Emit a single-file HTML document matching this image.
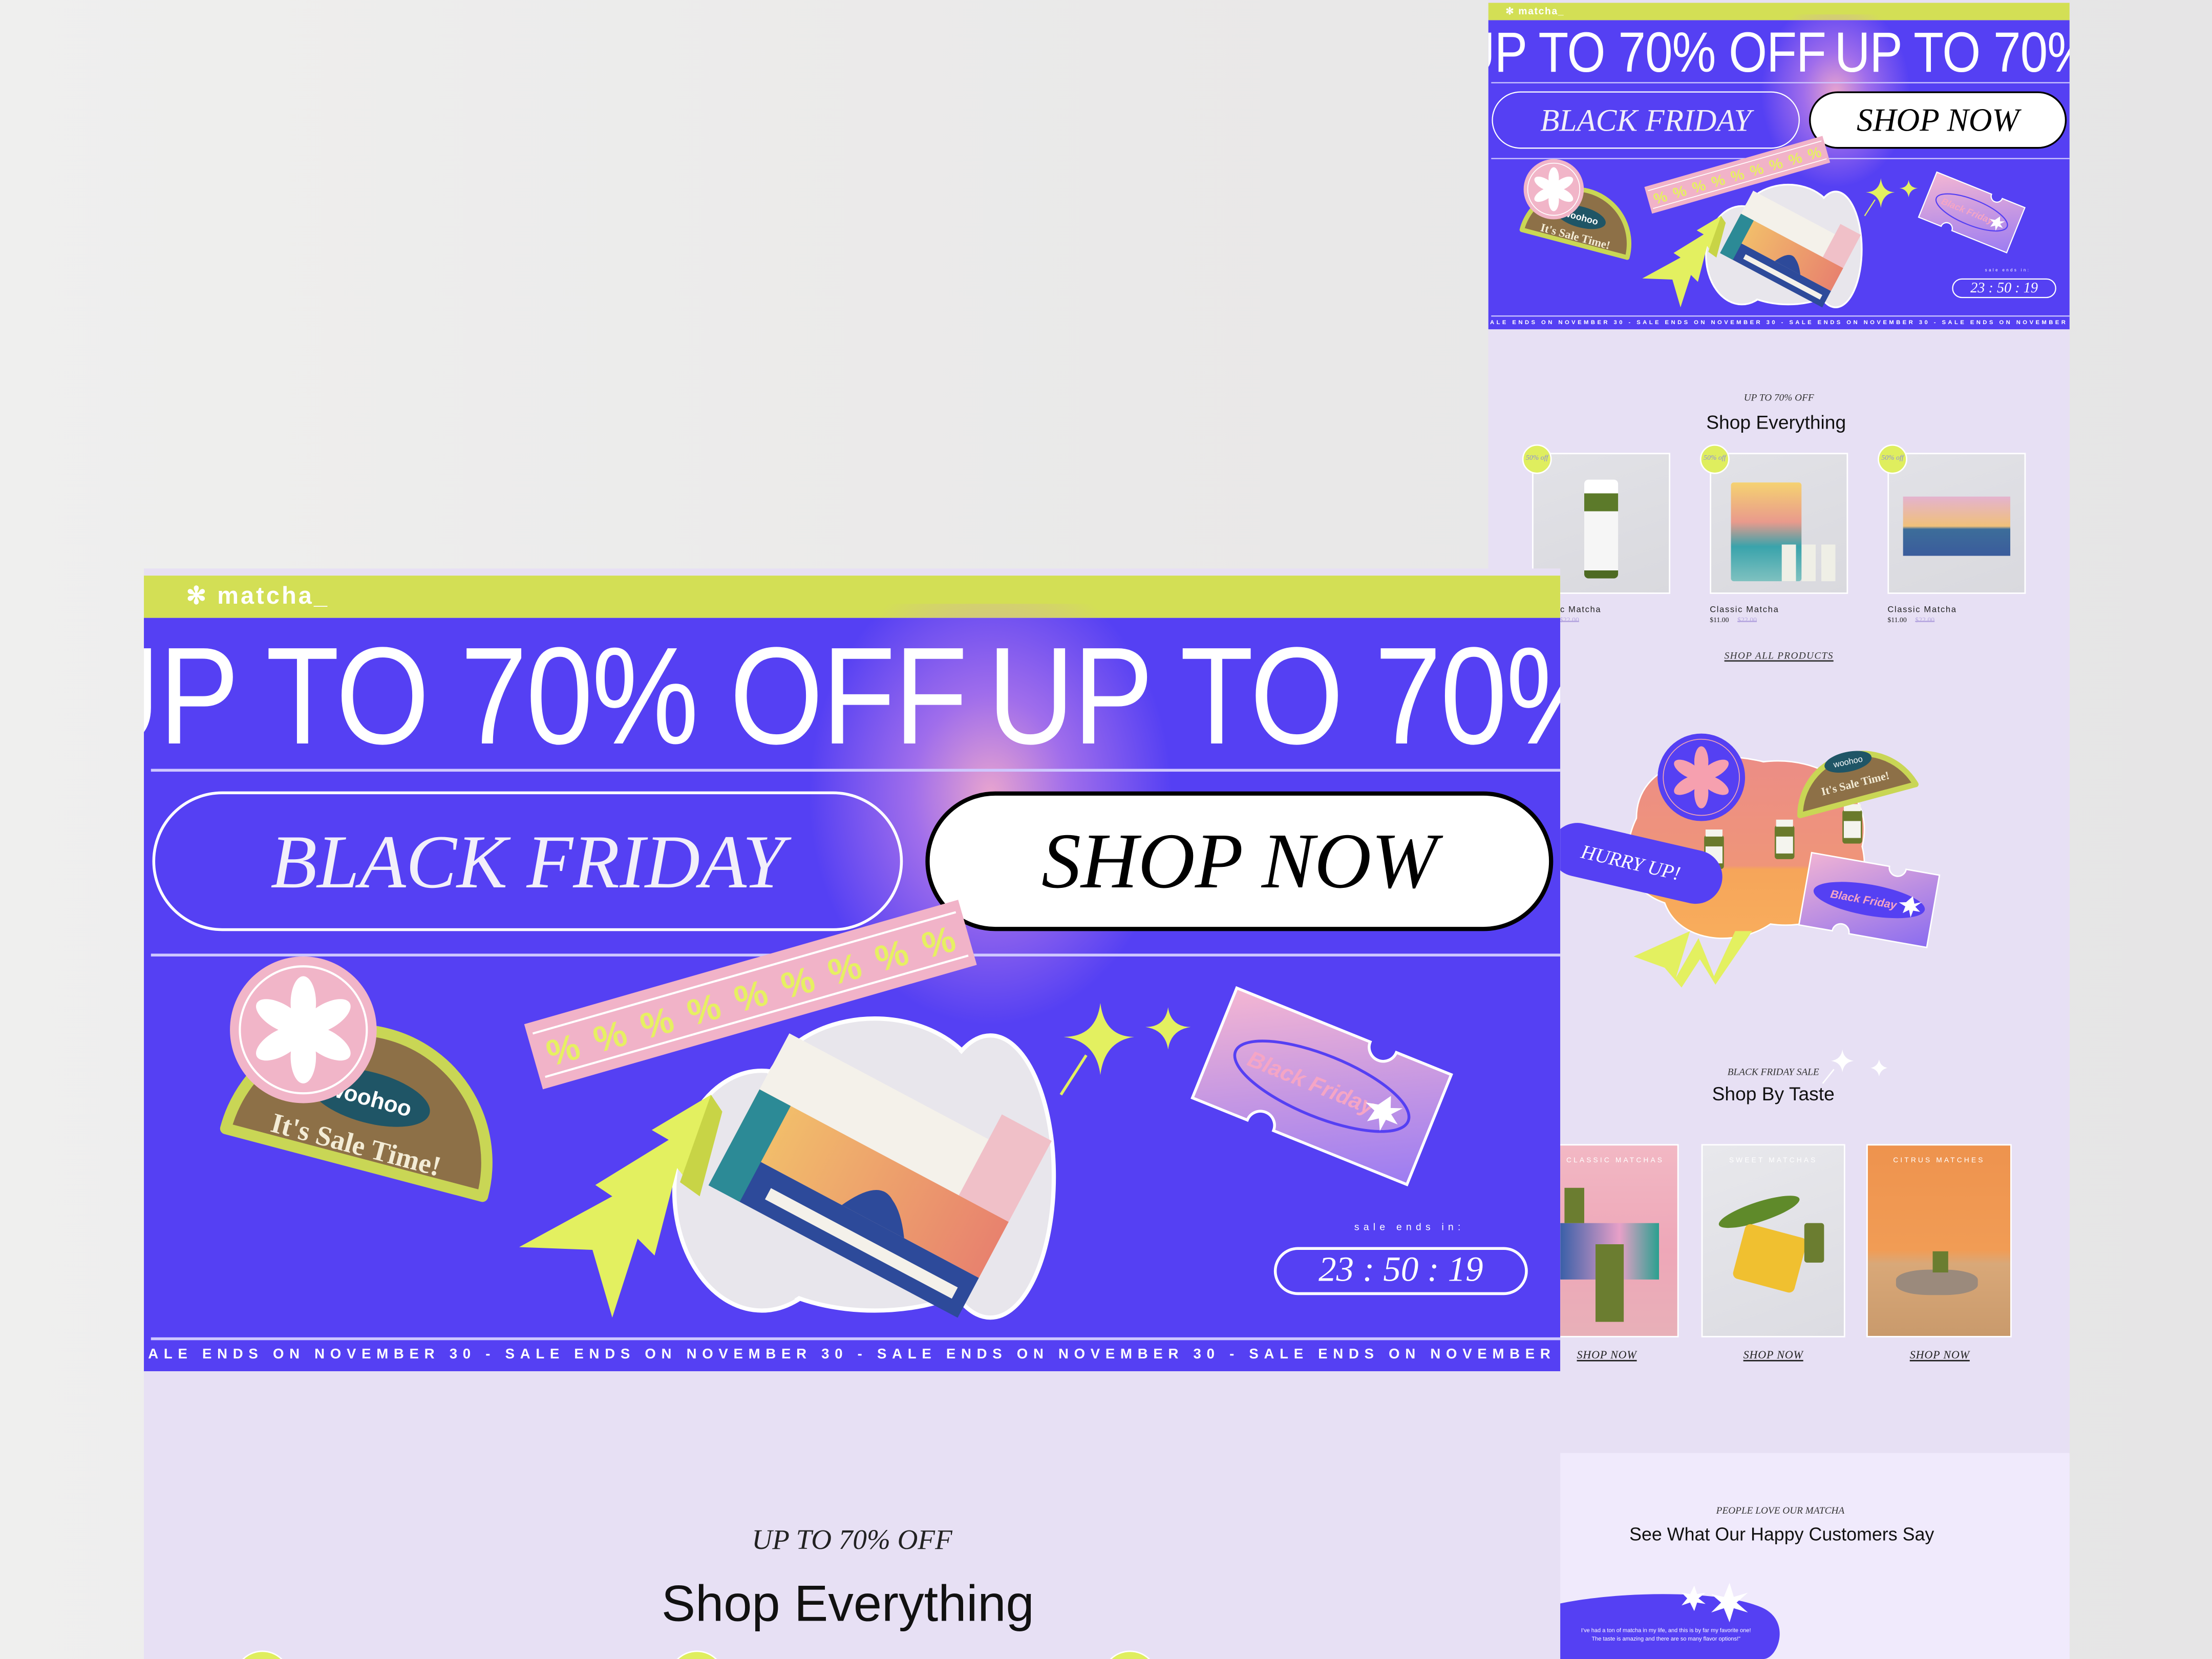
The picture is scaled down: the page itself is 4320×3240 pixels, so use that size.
<!DOCTYPE html>
<html><head><meta charset="utf-8">
<style>
*{margin:0;padding:0;box-sizing:border-box}
html,body{width:4320px;height:3240px;overflow:hidden;background:#ebeaea}
#s{position:absolute;left:0;top:0;width:1568px;height:1176px;transform:scale(2.75511);transform-origin:0 0;background:linear-gradient(90deg,#efefee 0%,#e9e8e8 60%,#e6e5e6 100%);font-family:"Liberation Sans",sans-serif;overflow:hidden}
.abs{position:absolute}
.hero{position:absolute;width:1004px;height:564px;overflow:hidden;transform-origin:0 0}
.gbar{position:absolute;left:0;top:0;width:1004px;height:30px;background:#d3df55}
.logo{position:absolute;left:30px;top:5px;color:#fff;font-weight:bold;font-size:17px;letter-spacing:1.5px}
.pur{position:absolute;left:0;top:30px;width:1004px;height:534px;background:#5540f3}
.glow{position:absolute;left:470px;top:20px;width:260px;height:300px;background:radial-gradient(ellipse at 50% 45%,rgba(240,170,205,.95) 0%,rgba(210,140,230,.6) 30%,rgba(85,64,243,0) 70%)}
.big{position:absolute;top:36px;color:#fff;font-size:98px;line-height:98px;white-space:nowrap;letter-spacing:-1px;transform:scaleX(.87);transform-origin:0 0}
.hl{position:absolute;left:5px;width:999px;height:2px;background:#cfc8ff}
.pill{position:absolute;border-radius:50px;display:flex;align-items:center;justify-content:center;font-family:"Liberation Serif",serif;font-style:italic;white-space:nowrap}
.serif{font-family:"Liberation Serif",serif;font-style:italic}
.mq{position:absolute;left:3px;top:547px;color:#fff;font-size:10px;font-weight:bold;letter-spacing:3.9px;white-space:nowrap}
.ctr{position:absolute;text-align:center;white-space:nowrap;transform:translateX(-50%)}
.prod{position:absolute;width:98px;height:100px;border:1.5px solid #fff;background:linear-gradient(160deg,#e2e2e7,#d9d9de);overflow:hidden}
.badge{position:absolute;width:21px;height:21px;border-radius:50%;background:#dfee5e;border:1px solid #fff;font-family:"Liberation Serif",serif;font-style:italic;font-size:5px;color:#8a8be0;display:flex;align-items:center;justify-content:center}
.pl{position:absolute;font-size:6px;letter-spacing:.6px;color:#222}
.pp{position:absolute;font-size:5px;font-family:"Liberation Serif",serif;color:#222}
.pp s{color:#b7a8e0;margin-left:6px}
.card{position:absolute;height:137px;border:1.5px solid #fff;overflow:hidden}
.ct{position:absolute;top:8px;left:0;right:0;text-align:center;color:#fff;font-size:5px;letter-spacing:1.5px}
.sn{position:absolute;font-family:"Liberation Serif",serif;font-style:italic;font-size:8px;color:#222;letter-spacing:.3px;transform:translateX(-50%);text-decoration:underline;text-decoration-thickness:.5px}
</style></head><body>
<div id="s">

<!-- RIGHT PAGE -->
<div class="abs" style="left:1055px;top:0;width:412px;height:1176px;background:#e7e0f4"></div>
<div class="abs" style="left:1055px;top:1030px;width:412px;height:146px;background:#f0eafc"></div>

<div class="hero" style="left:1055px;top:2px;transform:scale(0.4104)">
 <div class="gbar"><span class="logo">✻ matcha_</span></div>
 <div class="pur"></div>
 <div class="glow"></div>
 <div class="big" style="left:-50px">UP TO 70% OFF</div>
 <div class="big" style="left:598px">UP TO 70%</div>
 <div class="hl" style="top:137px"></div>
 <div class="pill" style="left:6px;top:153px;width:532px;height:99px;border:2px solid #fff;color:#f2effa;font-size:54px">BLACK FRIDAY</div>
 <div class="pill" style="left:554px;top:153px;width:445px;height:99px;border:3px solid #000;background:#fff;color:#000;font-size:56px">SHOP NOW</div>
 <div class="hl" style="top:268px"></div>
 <svg class="abs" style="left:0;top:0" width="1004" height="564" viewBox="0 0 1004 564">
  <defs>
   <linearGradient id="tk" x1="0" y1="0" x2="1" y2="1"><stop offset="0" stop-color="#f4b6d2"/><stop offset="1" stop-color="#9c7cf2"/></linearGradient>
   <linearGradient id="bx" x1="0" y1="0" x2="1" y2="0"><stop offset="0" stop-color="#f3c56a"/><stop offset="1" stop-color="#e8826e"/></linearGradient>
  </defs>
  <path d="M58,392 A93 93 0 0 1 240,440 Z" fill="#8d7047" stroke="#c9d655" stroke-width="8" stroke-linejoin="round"/>
  <ellipse cx="160" cy="370" rx="44" ry="18" transform="rotate(15 160 370)" fill="#1f5566"/>
  <text x="160" y="376" font-size="16" fill="#fff" font-weight="bold" text-anchor="middle" transform="rotate(15 160 370)">woohoo</text>
  <text x="150" y="410" font-family="Liberation Serif" font-weight="bold" font-size="20" fill="#f3ecd6" text-anchor="middle" transform="rotate(15 150 405)">It's Sale Time!</text>
  <circle cx="113" cy="322" r="52" fill="#f1b5c8"/><circle cx="113" cy="322" r="45" fill="none" stroke="#fff" stroke-width="1.5"/>
  <g transform="translate(113 322)" fill="#fff">
   <ellipse cx="0" cy="-19" rx="9" ry="19"/><ellipse cx="0" cy="-19" rx="9" ry="19" transform="rotate(60)"/><ellipse cx="0" cy="-19" rx="9" ry="19" transform="rotate(120)"/><ellipse cx="0" cy="-19" rx="9" ry="19" transform="rotate(180)"/><ellipse cx="0" cy="-19" rx="9" ry="19" transform="rotate(240)"/><ellipse cx="0" cy="-19" rx="9" ry="19" transform="rotate(300)"/>
  </g>
  <g transform="translate(508 416)" fill="#e8e6ec" stroke="#fff" stroke-width="3">
   <ellipse cx="-70" cy="20" rx="62" ry="85"/><ellipse cx="10" cy="-40" rx="80" ry="62"/><ellipse cx="92" cy="10" rx="45" ry="100"/><ellipse cx="10" cy="55" rx="95" ry="50"/>
  </g>
  <g transform="translate(508 416)" fill="#e8e6ec"><ellipse cx="-70" cy="20" rx="60" ry="83"/><ellipse cx="10" cy="-40" rx="78" ry="60"/><ellipse cx="92" cy="10" rx="43" ry="98"/><ellipse cx="10" cy="55" rx="93" ry="48"/><ellipse cx="10" cy="10" rx="100" ry="70"/></g>
  <g transform="translate(520 420) rotate(28)">
   <rect x="-100" y="-55" width="200" height="45" fill="#f4f1ea"/>
   <rect x="-100" y="-10" width="200" height="45" fill="url(#bx)"/>
   <rect x="-100" y="35" width="200" height="32" fill="#2d4a9a"/>
   <path d="M-10,35 q15,-30 30,-20 q10,5 20,20 z" fill="#2d4a9a"/>
   <rect x="-60" y="48" width="150" height="9" fill="#f4f1ea"/>
   <rect x="-100" y="-10" width="25" height="77" fill="#2c8a96"/>
   <rect x="60" y="-75" width="40" height="65" fill="#f0c0c8"/>
  </g>
  <g transform="translate(430 297) rotate(-16)">
   <rect x="-160" y="-24" width="320" height="48" fill="#f1b3c8"/>
   <line x1="-156" y1="-16" x2="156" y2="-16" stroke="#fff" stroke-width="1.5"/><line x1="-156" y1="16" x2="156" y2="16" stroke="#fff" stroke-width="1.5"/>
   <text x="-150" y="10" font-size="26" fill="#e6f062" font-weight="bold" textLength="300" lengthAdjust="spacing">%%%%%%%%%</text>
  </g>
  <polygon points="266,476 332,440 320,432 372,400 360,393 402,368 386,430 378,420 362,482 350,470 332,526 318,478" fill="#e3f060"/>
  <polygon points="380,430 402,368 410,380 394,440" fill="#c8d446"/>
  <path d="M678,303 Q681,327 702,327 Q681,330 678,354 Q675,330 652,327 Q675,327 678,303Z" fill="#e3f060"/>
  <line x1="668" y1="340" x2="650" y2="368" stroke="#e3f060" stroke-width="2"/>
  <path d="M726,306 Q728,320 742,320 Q728,322 726,336 Q724,322 710,320 Q724,320 726,306Z" fill="#e3f060"/>
  <g transform="translate(835 362) rotate(22)">
   <path d="M-82,-42 H20 a10,10 0 0 0 20,0 H82 V42 H-20 a10,10 0 0 0 -20,0 H-82 Z" fill="url(#tk)" stroke="#fff" stroke-width="2"/>
   <ellipse cx="0" cy="0" rx="66" ry="22" fill="none" stroke="#5540f3" stroke-width="2"/>
   <text x="-8" y="6" font-size="16" font-weight="bold" font-style="italic" fill="#f5a5c5" text-anchor="middle">Black Friday</text>
   <path d="M48,-12 l3,8 8,-3 -6,7 7,5 -9,0 -1,9 -4,-8 -7,5 2,-9 -8,-3 9,-2z" fill="#fff"/>
  </g>
 </svg>
 <div class="abs" style="left:858px;top:459px;color:#fff;font-size:7px;letter-spacing:3px">sale ends in:</div>
 <div class="pill" style="left:801px;top:476px;width:180px;height:34px;border:2px solid #fff;color:#fff;font-size:25px">23 : 50 : 19</div>
 <div class="hl" style="top:540px"></div>
 <div class="mq">ALE ENDS ON NOVEMBER 30 - SALE ENDS ON NOVEMBER 30 - SALE ENDS ON NOVEMBER 30 - SALE ENDS ON NOVEMBER 30 - SALE</div>
</div>

<div class="ctr serif" style="left:1261px;top:278px;font-size:7px;color:#333">UP TO 70% OFF</div>
<div class="ctr" style="left:1259px;top:292px;font-size:13.5px;color:#111">Shop Everything</div>

<div class="prod" style="left:1086px;top:321px"><div class="abs" style="left:36px;top:18px;width:24px;height:70px;background:linear-gradient(#fff 0 14%,#5c7a2a 14% 32%,#f6f6f6 32% 92%,#4d6a22 92%);border-radius:3px"></div></div>
<div class="prod" style="left:1212px;top:321px"><div class="abs" style="left:14px;top:20px;width:50px;height:70px;background:linear-gradient(#f5d271,#e99a8c 40%,#39a3ab 65%,#7fc1c0);border-radius:2px"></div><div class="abs" style="left:50px;top:64px;width:40px;height:26px;background:repeating-linear-gradient(90deg,#efefe6 0 10px,transparent 10px 14px)"></div></div>
<div class="prod" style="left:1338px;top:321px"><div class="abs" style="left:10px;top:30px;width:76px;height:42px;background:linear-gradient(180deg,#e4b3cf,#f0c07a 50%,#3c6d9a 55%,#3b5c9c);"></div></div>
<div class="badge" style="left:1079px;top:315px">50% off</div>
<div class="badge" style="left:1205px;top:315px">50% off</div>
<div class="badge" style="left:1331px;top:315px">50% off</div>
<div class="pl" style="left:1086px;top:430px">Classic Matcha</div><div class="pp" style="left:1086px;top:438px">$11.00<s>$22.00</s></div>
<div class="pl" style="left:1212px;top:430px">Classic Matcha</div><div class="pp" style="left:1212px;top:438px">$11.00<s>$22.00</s></div>
<div class="pl" style="left:1338px;top:430px">Classic Matcha</div><div class="pp" style="left:1338px;top:438px">$11.00<s>$22.00</s></div>
<div class="ctr serif" style="left:1261px;top:461px;font-size:7px;color:#333;letter-spacing:.5px;text-decoration:underline">SHOP ALL PRODUCTS</div>

<svg class="abs" style="left:0;top:0" width="1568" height="1176" viewBox="0 0 1568 1176">
 <defs>
  <linearGradient id="sb" x1="0" y1="0" x2="0" y2="1"><stop offset="0" stop-color="#ec8d86"/><stop offset=".6" stop-color="#ef9579"/><stop offset=".62" stop-color="#f6a55a"/><stop offset="1" stop-color="#f8ad5c"/></linearGradient>
  <linearGradient id="tk2" x1="0" y1="0" x2="1" y2="1"><stop offset="0" stop-color="#f0b3d4"/><stop offset="1" stop-color="#8a6cf0"/></linearGradient>
 </defs>
 <path d="M1160,580 C1160,540 1210,530 1250,540 C1290,535 1330,560 1320,600 C1330,640 1290,660 1255,655 C1230,672 1190,668 1180,640 C1150,630 1150,600 1160,580Z" fill="url(#sb)" stroke="#fff" stroke-width="1"/>
 <g fill="#6a7a2c"><rect x="1208" y="592" width="14" height="24" rx="2"/><rect x="1258" y="585" width="14" height="24" rx="2"/><rect x="1306" y="574" width="14" height="24" rx="2"/></g>
 <g fill="#f4f4ee"><rect x="1209" y="600" width="12" height="12"/><rect x="1259" y="593" width="12" height="12"/><rect x="1307" y="582" width="12" height="12"/><rect x="1209" y="588" width="12" height="5"/><rect x="1259" y="581" width="12" height="5"/><rect x="1307" y="570" width="12" height="5"/></g>
 <circle cx="1206" cy="551" r="31" fill="#5540f3"/><circle cx="1206" cy="551" r="27" fill="none" stroke="#f4a7b3" stroke-width=".6"/>
 <g transform="translate(1206 551)" fill="#f6a0af"><ellipse cy="-11" rx="5" ry="11"/><ellipse cy="-11" rx="5" ry="11" transform="rotate(60)"/><ellipse cy="-11" rx="5" ry="11" transform="rotate(120)"/><ellipse cy="-11" rx="5" ry="11" transform="rotate(180)"/><ellipse cy="-11" rx="5" ry="11" transform="rotate(240)"/><ellipse cy="-11" rx="5" ry="11" transform="rotate(300)"/></g>
 <path d="M1276,578 A44 44 0 0 1 1358,556 Z" fill="#8d7047" stroke="#c9d655" stroke-width="4" stroke-linejoin="round"/>
 <ellipse cx="1310" cy="540" rx="17" ry="7" transform="rotate(-12 1310 540)" fill="#1f5566"/>
 <text x="1310" y="542" font-size="6" fill="#fff" text-anchor="middle" transform="rotate(-12 1310 540)">woohoo</text>
 <text x="1315" y="558" font-family="Liberation Serif" font-size="8" font-weight="bold" fill="#f3ecd6" text-anchor="middle" transform="rotate(-14 1315 555)">It's Sale Time!</text>
 <g transform="translate(1160 612) rotate(13)"><rect x="-62" y="-19" width="124" height="38" rx="19" fill="#5540f3"/><text x="-4" y="5" font-family="Liberation Serif" font-style="italic" font-size="14" fill="#fff" text-anchor="middle">HURRY UP!</text></g>
 <g transform="translate(1325 638) rotate(10)">
  <path d="M-46,-26 H10 a6,6 0 0 0 12,0 H46 V26 H-10 a6,6 0 0 0 -12,0 H-46Z" fill="url(#tk2)" stroke="#fff" stroke-width="1"/>
  <ellipse rx="40" ry="11" fill="#5540f3"/><text x="-4" y="3" font-size="8" font-weight="bold" font-style="italic" fill="#f5a5c5" text-anchor="middle">Black Friday</text>
  <path d="M30,-8 l2,5 5,-2 -4,4 4,3 -5,0 -1,5 -2,-5 -4,3 1,-5 -5,-2 5,-1z" fill="#fff"/>
 </g>
 <polygon points="1158,678 1198,660 1188,693 1204,665 1215,692 1230,660 1242,660 1216,698 1205,680 1192,700 1180,686" fill="#e3f060"/>
 <path d="M1306,744 Q1307,751 1314,752 Q1307,753 1306,760 Q1305,753 1298,752 Q1305,751 1306,744Z" fill="#fff"/>
 <path d="M1332,751 Q1333,756 1338,757 Q1333,758 1332,763 Q1331,758 1326,757 Q1331,756 1332,751Z" fill="#fff"/>
 <line x1="1300" y1="758" x2="1292" y2="768" stroke="#fff" stroke-width="1"/>
</svg>

<div class="ctr serif" style="left:1257px;top:756px;font-size:7px;color:#333">BLACK FRIDAY SALE</div>
<div class="ctr" style="left:1257px;top:768px;font-size:13.5px;color:#111">Shop By Taste</div>
<div class="card" style="left:1100px;top:811px;width:90px;background:linear-gradient(180deg,#f2b8c4,#eea7b8 55%,#e8b0b8)"><div class="ct">CLASSIC MATCHAS</div><div class="abs" style="left:5px;top:55px;width:70px;height:40px;background:linear-gradient(90deg,#3a5fa8,#e8a0c8 60%,#2aa08f)"></div><div class="abs" style="left:8px;top:30px;width:14px;height:25px;background:#6b7d30"></div><div class="abs" style="left:30px;top:70px;width:20px;height:55px;background:#6b7d30"></div></div>
<div class="card" style="left:1206px;top:811px;width:102px;background:linear-gradient(160deg,#e8e8ec,#dcdce2)"><div class="ct">SWEET MATCHAS</div><div class="abs" style="left:10px;top:40px;width:60px;height:14px;border-radius:50%;background:#5f8a2a;transform:rotate(-18deg)"></div><div class="abs" style="left:25px;top:60px;width:45px;height:40px;background:#f0c030;transform:rotate(15deg);border-radius:4px"></div><div class="abs" style="left:72px;top:55px;width:14px;height:28px;background:#6b7d30;border-radius:2px"></div></div>
<div class="card" style="left:1323px;top:811px;width:103px;background:linear-gradient(180deg,#ee934e,#f19c55 55%,#d9a878 62%,#c99a6c)"><div class="ct">CITRUS MATCHES</div><div class="abs" style="left:20px;top:88px;width:58px;height:18px;background:#9b8a7c;border-radius:40%"></div><div class="abs" style="left:46px;top:75px;width:11px;height:15px;background:#6b7d30"></div></div>
<div class="sn" style="left:1139px;top:956px">SHOP NOW</div>
<div class="sn" style="left:1257px;top:956px">SHOP NOW</div>
<div class="sn" style="left:1375px;top:956px">SHOP NOW</div>

<div class="ctr serif" style="left:1262px;top:1067px;font-size:7px;color:#333">PEOPLE LOVE OUR MATCHA</div>
<div class="ctr" style="left:1263px;top:1080px;font-size:13px;color:#111">See What Our Happy Customers Say</div>
<svg class="abs" style="left:1100px;top:1120px" width="170" height="56" viewBox="0 0 170 56"><path d="M0,18 C40,8 120,6 150,20 C170,30 160,56 150,56 L0,56Z" fill="#5540f3"/><path d="M98,10 l3,-6 2,6 6,-1 -5,4 5,4 -6,-1 -2,6 -3,-6 -6,2 4,-5 -4,-4z" fill="#fff"/><path d="M122,12 l4,-10 3,10 10,-3 -8,7 8,7 -10,-3 -3,10 -4,-10 -9,3 7,-7 -7,-6z" fill="#fff"/></svg>
<div class="abs" style="left:1106px;top:1153px;font-size:4px;color:#fff;width:150px;text-align:center;line-height:6px">I've had a ton of matcha in my life, and this is by far my favorite one!<br>The taste is amazing and there are so many flavor options!"</div>

<!-- LEFT FRONT PANEL -->
<div class="abs" style="left:102px;top:403px;width:1004px;height:773px;background:#e7e0f4"></div>
<div class="hero" style="left:102px;top:408px">
 <div class="gbar"><span class="logo">✻ matcha_</span></div>
 <div class="pur"></div>
 <div class="glow"></div>
 <div class="big" style="left:-50px">UP TO 70% OFF</div>
 <div class="big" style="left:598px">UP TO 70%</div>
 <div class="hl" style="top:137px"></div>
 <div class="pill" style="left:6px;top:153px;width:532px;height:99px;border:2px solid #fff;color:#f2effa;font-size:54px">BLACK FRIDAY</div>
 <div class="pill" style="left:554px;top:153px;width:445px;height:99px;border:3px solid #000;background:#fff;color:#000;font-size:56px">SHOP NOW</div>
 <div class="hl" style="top:268px"></div>
 <svg class="abs" style="left:0;top:0" width="1004" height="564" viewBox="0 0 1004 564">
  <defs>
   <linearGradient id="tkb" x1="0" y1="0" x2="1" y2="1"><stop offset="0" stop-color="#f4b6d2"/><stop offset="1" stop-color="#9c7cf2"/></linearGradient>
   <linearGradient id="bxb" x1="0" y1="0" x2="1" y2="0"><stop offset="0" stop-color="#f3c56a"/><stop offset="1" stop-color="#e8826e"/></linearGradient>
  </defs>
  <path d="M58,392 A93 93 0 0 1 240,440 Z" fill="#8d7047" stroke="#c9d655" stroke-width="8" stroke-linejoin="round"/>
  <ellipse cx="160" cy="370" rx="44" ry="18" transform="rotate(15 160 370)" fill="#1f5566"/>
  <text x="160" y="376" font-size="16" fill="#fff" font-weight="bold" text-anchor="middle" transform="rotate(15 160 370)">woohoo</text>
  <text x="150" y="410" font-family="Liberation Serif" font-weight="bold" font-size="20" fill="#f3ecd6" text-anchor="middle" transform="rotate(15 150 405)">It's Sale Time!</text>
  <circle cx="113" cy="322" r="52" fill="#f1b5c8"/><circle cx="113" cy="322" r="45" fill="none" stroke="#fff" stroke-width="1.5"/>
  <g transform="translate(113 322)" fill="#fff">
   <ellipse cx="0" cy="-19" rx="9" ry="19"/><ellipse cx="0" cy="-19" rx="9" ry="19" transform="rotate(60)"/><ellipse cx="0" cy="-19" rx="9" ry="19" transform="rotate(120)"/><ellipse cx="0" cy="-19" rx="9" ry="19" transform="rotate(180)"/><ellipse cx="0" cy="-19" rx="9" ry="19" transform="rotate(240)"/><ellipse cx="0" cy="-19" rx="9" ry="19" transform="rotate(300)"/>
  </g>
  <g transform="translate(508 416)" fill="#e8e6ec" stroke="#fff" stroke-width="3">
   <ellipse cx="-70" cy="20" rx="62" ry="85"/><ellipse cx="10" cy="-40" rx="80" ry="62"/><ellipse cx="92" cy="10" rx="45" ry="100"/><ellipse cx="10" cy="55" rx="95" ry="50"/>
  </g>
  <g transform="translate(508 416)" fill="#e8e6ec"><ellipse cx="-70" cy="20" rx="60" ry="83"/><ellipse cx="10" cy="-40" rx="78" ry="60"/><ellipse cx="92" cy="10" rx="43" ry="98"/><ellipse cx="10" cy="55" rx="93" ry="48"/><ellipse cx="10" cy="10" rx="100" ry="70"/></g>
  <g transform="translate(520 420) rotate(28)">
   <rect x="-100" y="-55" width="200" height="45" fill="#f4f1ea"/>
   <rect x="-100" y="-10" width="200" height="45" fill="url(#bxb)"/>
   <rect x="-100" y="35" width="200" height="32" fill="#2d4a9a"/>
   <path d="M-10,35 q15,-30 30,-20 q10,5 20,20 z" fill="#2d4a9a"/>
   <rect x="-60" y="48" width="150" height="9" fill="#f4f1ea"/>
   <rect x="-100" y="-10" width="25" height="77" fill="#2c8a96"/>
   <rect x="60" y="-75" width="40" height="65" fill="#f0c0c8"/>
  </g>
  <g transform="translate(430 297) rotate(-16)">
   <rect x="-160" y="-24" width="320" height="48" fill="#f1b3c8"/>
   <line x1="-156" y1="-16" x2="156" y2="-16" stroke="#fff" stroke-width="1.5"/><line x1="-156" y1="16" x2="156" y2="16" stroke="#fff" stroke-width="1.5"/>
   <text x="-150" y="10" font-size="26" fill="#e6f062" font-weight="bold" textLength="300" lengthAdjust="spacing">%%%%%%%%%</text>
  </g>
  <polygon points="266,476 332,440 320,432 372,400 360,393 402,368 386,430 378,420 362,482 350,470 332,526 318,478" fill="#e3f060"/>
  <polygon points="380,430 402,368 410,380 394,440" fill="#c8d446"/>
  <path d="M678,303 Q681,327 702,327 Q681,330 678,354 Q675,330 652,327 Q675,327 678,303Z" fill="#e3f060"/>
  <line x1="668" y1="340" x2="650" y2="368" stroke="#e3f060" stroke-width="2"/>
  <path d="M726,306 Q728,320 742,320 Q728,322 726,336 Q724,322 710,320 Q724,320 726,306Z" fill="#e3f060"/>
  <g transform="translate(835 362) rotate(22)">
   <path d="M-82,-42 H20 a10,10 0 0 0 20,0 H82 V42 H-20 a10,10 0 0 0 -20,0 H-82 Z" fill="url(#tkb)" stroke="#fff" stroke-width="2"/>
   <ellipse cx="0" cy="0" rx="66" ry="22" fill="none" stroke="#5540f3" stroke-width="2"/>
   <text x="-8" y="6" font-size="16" font-weight="bold" font-style="italic" fill="#f5a5c5" text-anchor="middle">Black Friday</text>
   <path d="M48,-12 l3,8 8,-3 -6,7 7,5 -9,0 -1,9 -4,-8 -7,5 2,-9 -8,-3 9,-2z" fill="#fff"/>
  </g>
 </svg>
 <div class="abs" style="left:858px;top:459px;color:#fff;font-size:7px;letter-spacing:3px">sale ends in:</div>
 <div class="pill" style="left:801px;top:476px;width:180px;height:34px;border:2px solid #fff;color:#fff;font-size:25px">23 : 50 : 19</div>
 <div class="hl" style="top:540px"></div>
 <div class="mq">ALE ENDS ON NOVEMBER 30 - SALE ENDS ON NOVEMBER 30 - SALE ENDS ON NOVEMBER 30 - SALE ENDS ON NOVEMBER 30 - SALE</div>
</div>

<div class="ctr serif" style="left:604px;top:1081px;font-size:20px;color:#222">UP TO 70% OFF</div>
<div class="ctr" style="left:601px;top:1116px;font-size:36px;color:#111">Shop Everything</div>
<div class="abs" style="left:166px;top:1170px;width:40px;height:40px;border-radius:50%;background:#dfee5e;border:1px solid #fff"></div>
<div class="abs" style="left:474px;top:1170px;width:40px;height:40px;border-radius:50%;background:#dfee5e;border:1px solid #fff"></div>
<div class="abs" style="left:781px;top:1170px;width:40px;height:40px;border-radius:50%;background:#dfee5e;border:1px solid #fff"></div>

</div>
</body></html>
